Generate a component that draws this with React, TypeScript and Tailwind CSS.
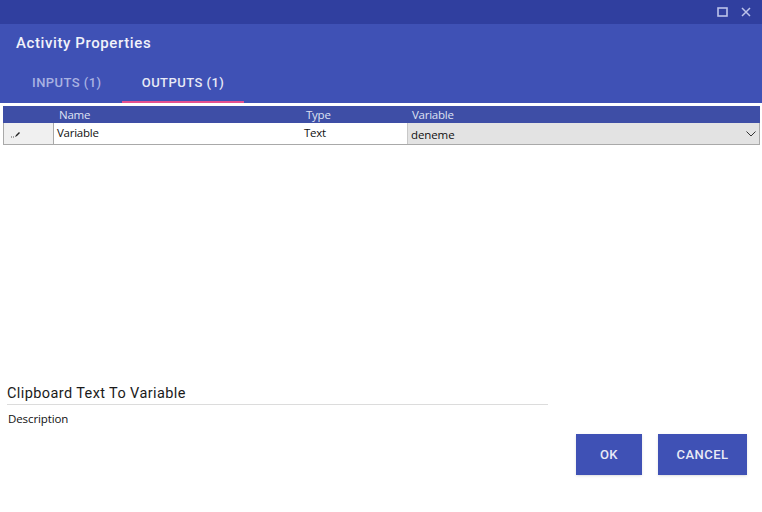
export default function App() {
  return (
    <div className="w-[762px] h-[512px] bg-white flex flex-col overflow-hidden font-['Roboto',sans-serif]">
      <div className="h-6 bg-[#303f9f] flex items-center justify-end gap-[13px] pr-[10px] shrink-0">
        <svg width="11" height="10" viewBox="0 0 11 10" fill="none" stroke="#bcc3ea" strokeWidth="1.6"><rect x="1" y="1" width="9" height="8" /></svg>
        <svg width="11" height="10" viewBox="0 0 11 10" fill="none" stroke="#bcc3ea" strokeWidth="1.5"><path d="M1 1l8 8M9 1l-8 8" /></svg>
      </div>
      <div className="h-[79px] bg-[#3f51b5] flex flex-col shrink-0">
        <div className="pl-4 pt-[9px] text-[15px] leading-[20px] font-medium tracking-[0.6px] text-[#f1f2fa]">Activity Properties</div>
        <div className="flex mt-[15px] pl-[12px]">
          <div className="w-[110px] h-[35px] pt-[7px] pl-[20px] text-[13px] leading-[16px] font-medium tracking-[0.45px] text-[#a9b2e2]">INPUTS (1)</div>
          <div className="w-[122px] h-[35px] pt-[7px] text-center text-[13px] leading-[16px] font-medium tracking-[0.45px] text-[#e8eaf6] border-b-2 border-[#e4508f]">OUTPUTS (1)</div>
        </div>
      </div>
      <div className="mx-[3px] mt-[3px] w-[757px] font-['Open_Sans',sans-serif] text-[11.5px] tracking-[-0.25px] text-[#111]">
        <div className="h-[17px] bg-[#3e4ea6] flex text-[#dfe2f3] leading-[18px]">
          <div className="w-[56px]" />
          <div className="w-[247px]">Name</div>
          <div className="w-[106px]">Type</div>
          <div className="flex-1">Variable</div>
        </div>
        <div className="h-[22px] flex border-b border-l border-r border-[#a9a9a9] leading-[19px]">
          <div className="w-[50px] bg-[#f0f0f0] border-r border-[#a9a9a9] flex items-center pl-[7px]">
            <svg width="10" height="8" viewBox="0 0 10 8"><path d="M0 7h1M2 7h1" stroke="#555" /><path d="M4 7l1-2 3-3 1 1-3 3z" fill="#222" /></svg>
          </div>
          <div className="w-[250px] pl-[3px]">Variable</div>
          <div className="w-[103px]">Text</div>
          <div className="flex-1 bg-[#e3e3e3] border-l border-[#c8c8c8] flex items-center justify-between pl-[3px] pr-[3px] tracking-[-0.1px]">
            <span className="leading-[19px] pt-px">deneme</span>
            <svg width="10" height="6" viewBox="0 0 10 6" fill="none" stroke="#333" strokeWidth="1"><path d="M0.5 0.5L5 5l4.5-4.5" /></svg>
          </div>
        </div>
      </div>
      <div className="flex-1 flex items-start pl-[7px] pt-[238px]">
        <div className="w-[541px]">
          <div className="h-[22px] pt-[2px] border-b border-[#dcdcdc] text-[14.5px] leading-[18px] tracking-[0.4px] text-[#1a1a1a]">Clipboard Text To Variable</div>
          <div className="pl-px pt-[6px] font-['Open_Sans',sans-serif] text-[11.5px] tracking-[-0.1px] leading-[16px] text-[#111]">Description</div>
        </div>
        <div className="flex gap-4 ml-[28px] mt-[51px] text-[#e8eaf6] text-[13px] font-medium tracking-[0.5px]">
          <div className="w-[66px] h-[41px] bg-[#3f51b5] shadow-sm flex items-center justify-center">OK</div>
          <div className="w-[89px] h-[41px] bg-[#3f51b5] shadow-sm flex items-center justify-center">CANCEL</div>
        </div>
      </div>
    </div>
  );
}
